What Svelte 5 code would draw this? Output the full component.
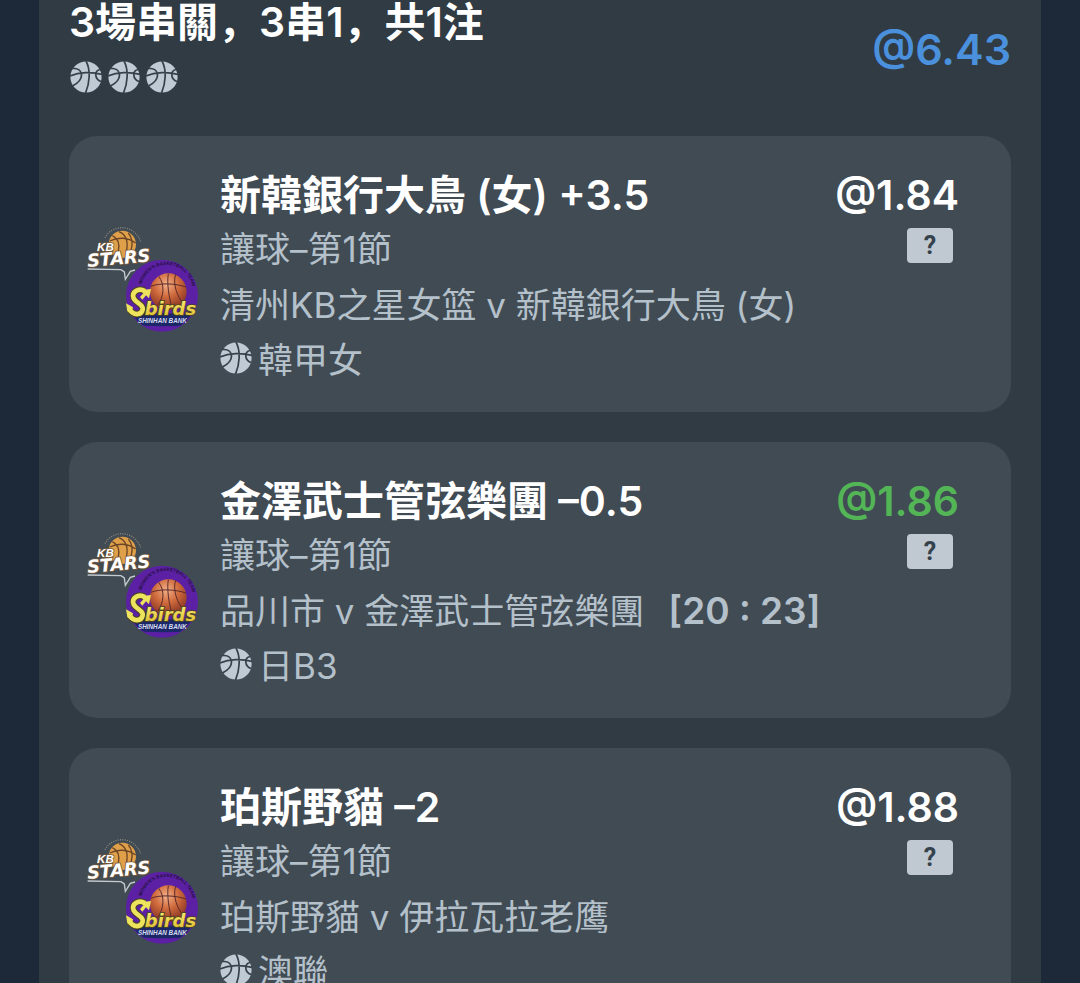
<script lang="ts">
    let slip = {
        title: "3場串關，3串1，共1注",
        odds: "6.43"
    };

    let bets = [
        {
            pick: "新韓銀行大鳥 (女) +3.5",
            market: "讓球–第1節",
            match: "清州KB之星女篮 v 新韓銀行大鳥 (女)",
            score: "",
            league: "韓甲女",
            odds: "1.84",
            won: false
        },
        {
            pick: "金澤武士管弦樂團 –0.5",
            market: "讓球–第1節",
            match: "品川市 v 金澤武士管弦樂團",
            score: "[20 : 23]",
            league: "日B3",
            odds: "1.86",
            won: true
        },
        {
            pick: "珀斯野貓 –2",
            market: "讓球–第1節",
            match: "珀斯野貓 v 伊拉瓦拉老鹰",
            score: "",
            league: "澳聯",
            odds: "1.88",
            won: false
        }
    ];
</script>

{#snippet ball()}
    <svg class="ball" viewBox="0 0 32 32" aria-hidden="true">
        <circle cx="16" cy="16" r="15.6" />
        <path d="M16 0C21 9 19.500 23 15.500 32M0 15C9 11 22 10.500 32 13.500M2 7.500C13 6.500 16 18 2.500 25M30 8.500C24 10 24.500 18 31 20.500" />
    </svg>
{/snippet}

{#snippet logos()}
    <svg class="logos" viewBox="0 0 405 375" role="img" aria-label="KB Stars, Sbirds">
        <defs>
            <radialGradient id="orange" cx="45%" cy="30%" r="75%">
                <stop offset="0" stop-color="#f3b089" />
                <stop offset="0.45" stop-color="#cf6a3c" />
                <stop offset="1" stop-color="#7c2c20" />
            </radialGradient>
            <linearGradient id="gold" x1="0" y1="0" x2="0" y2="1">
                <stop offset="0" stop-color="#fff07a" />
                <stop offset="1" stop-color="#d9b92c" />
            </linearGradient>
            <clipPath id="badge"><circle cx="261" cy="242" r="105" /></clipPath>
            <path id="arc" d="M200 208A70 70 0 0 1 350 246" />
        </defs>

        <path d="M90 68C112 27 176 26 197 79" fill="none" stroke="#8f877c" stroke-width="4" stroke-dasharray="3 4" />
        <circle cx="142" cy="88" r="41" fill="#e0a04a" />
        <path d="M112 62C130 70 134 88 130 108M132 50C156 60 160 82 154 110M104 78C128 66 158 66 182 84M160 54C172 68 174 86 168 106" fill="none" stroke="#6b4527" stroke-width="4" />
        <text class="kb" x="66" y="109">KB</text>
        <text class="stars" x="38" y="156" transform="rotate(-5 38 156)">STARS</text>
        <path d="M38 162L138 164L148 171L151 193L166 169L180 165" fill="none" stroke="#c5cbcf" stroke-width="4" />

        <circle cx="261" cy="242" r="108" fill="#5c20a5" />
        <g clip-path="url(#badge)">
            <path d="M160 302Q260 288 370 302V328Q260 340 160 328Z" fill="#1c2767" />
        </g>
        <text class="around"><textPath href="#arc">WOMEN'S BASKETBALL TEAM</textPath></text>
        <circle cx="280" cy="230" r="55" fill="url(#orange)" />
        <path d="M280 176C275 206 282 248 292 282M228 214C253 203 302 205 333 216M251 184C270 208 267 245 248 271M302 178C292 205 308 250 325 264" fill="none" stroke="#5b2a2a" stroke-width="3" />
        <path d="M210 228C190 217 168 231 176 250C184 266 207 268 203 284C198 303 174 301 164 283" fill="none" stroke="#49451f" stroke-width="20" />
        <path d="M210 228C190 217 168 231 176 250C184 266 207 268 203 284C198 303 174 301 164 283" fill="none" stroke="#ede35d" stroke-width="14" />
        <path d="M195 226L228 222L222 250L213 241L202 254L195 246L205 235ZM153 265L174 277L169 298L157 289Z" fill="#ede35d" />
        <text class="birds" x="209" y="299">birds</text>
        <text class="bank" x="189" y="325">SHINHAN BANK</text>
    </svg>
{/snippet}

<main>
    <section class="slip">
        <header>
            <div>
                <h1>{slip.title}</h1>
                <div class="balls">
                    {#each bets as bet (bet.pick)}
                        {@render ball()}
                    {/each}
                </div>
            </div>
            <strong class="total">@{slip.odds}</strong>
        </header>

        {#each bets as bet (bet.pick)}
            <article>
                {@render logos()}
                <div class="info">
                    <h2>{bet.pick}</h2>
                    <p class="market">{bet.market}</p>
                    <p class="match">{bet.match}{#if bet.score}<b>{bet.score}</b>{/if}</p>
                    <p class="league">{@render ball()}{bet.league}</p>
                </div>
                <div class="side">
                    <strong class:won={bet.won}>@{bet.odds}</strong>
                    <button type="button">?</button>
                </div>
            </article>
        {/each}
    </section>
</main>

<style>
    :global(body) {
        background: #1d2938;
    }

    main {
        height: 100vh;
        overflow-y: auto;
        scrollbar-width: none;
        font-family: Inter, "Noto Sans CJK SC", sans-serif;
        color: #fff;
    }

    .slip {
        display: flex;
        flex-direction: column;
        gap: 30px;
        margin: 0 39px;
        padding: 0 30px 30px;
        background: #303b44;
    }

    header {
        display: flex;
        justify-content: space-between;
        height: 106px;
    }

    h1, h2, p {
        margin: 0;
        white-space: nowrap;
    }

    h1, h2 {
        font-size: 41px;
        font-weight: 600;
    }

    h1 {
        line-height: 44px;
    }

    h2 {
        line-height: 54px;
    }

    .balls {
        display: flex;
        gap: 6px;
        margin-top: 17px;
        padding-left: 1px;
    }

    .ball {
        flex: none;
        width: 32px;
        height: 32px;
    }

    .ball circle {
        fill: #c0cad4;
    }

    .ball path {
        fill: none;
        stroke: #35414b;
        stroke-width: 1.7;
    }

    .total {
        font-size: 43px;
        font-weight: 600;
        line-height: 98px;
        color: #4a90dc;
    }

    article {
        display: flex;
        align-items: center;
        padding: 32px 52px 26px 6px;
        border-radius: 28px;
        background: #404b54;
    }

    .logos {
        flex: none;
        width: 135px;
        height: 125px;
        margin-right: 10px;
    }

    .info {
        flex: 1;
    }

    p {
        font-size: 35px;
        font-weight: 400;
        color: #b4c0ca;
    }

    .market {
        line-height: 54px;
    }

    .match {
        line-height: 58px;
    }

    .match b {
        margin-left: 24px;
        font-size: 37px;
        font-weight: 600;
    }

    .league {
        display: flex;
        align-items: center;
        gap: 6px;
        line-height: 52px;
    }

    .league .ball {
        margin-bottom: 4px;
    }

    .side {
        display: flex;
        flex-direction: column;
        align-items: flex-end;
        align-self: flex-start;
    }

    .side strong {
        font-size: 41px;
        font-weight: 600;
        line-height: 54px;
    }

    .side .won {
        color: #53b556;
    }

    button {
        width: 46px;
        height: 35px;
        margin: 6px 6px 0 0;
        padding: 0;
        border: 0;
        border-radius: 4px;
        background: #c0c9d2;
        color: #35414b;
        font: 700 25px/35px Roboto, sans-serif;
    }

    .kb {
        font: italic 700 35px "Liberation Sans", sans-serif;
        fill: #fff;
        stroke: #75583b;
        stroke-width: 4;
        paint-order: stroke;
    }

    .stars {
        font: italic 700 53px "DejaVu Sans", sans-serif;
        fill: #fff;
        stroke: #75583b;
        stroke-width: 5;
        paint-order: stroke;
    }

    .around {
        font: 700 14px "Liberation Sans", sans-serif;
        fill: #24113f;
    }

    .birds {
        font: italic 700 54px "DejaVu Sans", sans-serif;
        fill: url(#gold);
        stroke: #49451f;
        stroke-width: 5;
        paint-order: stroke;
    }

    .bank {
        font: italic 700 19px "Liberation Sans", sans-serif;
        fill: #d5dcf0;
    }
</style>
